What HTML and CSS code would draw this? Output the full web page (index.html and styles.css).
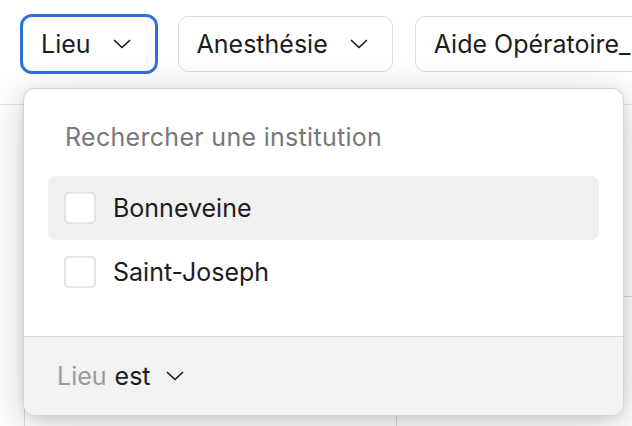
FILE: index.html
```html
<!DOCTYPE html>
<html lang="fr">
<head>
<meta charset="utf-8">
<link rel="stylesheet" href="styles.css">
</head>
<body>
<div class="page">
  <div class="toolbar">
    <button class="filter filter--active">Lieu <svg class="chev" viewBox="0 0 18 10"><path d="M1.5 1.5 L9 8.5 L16.5 1.5"/></svg></button>
    <button class="filter">Anesthésie <svg class="chev" viewBox="0 0 18 10"><path d="M1.5 1.5 L9 8.5 L16.5 1.5"/></svg></button>
    <button class="filter">Aide Opératoire_Instrumentiste <svg class="chev" viewBox="0 0 18 10"><path d="M1.5 1.5 L9 8.5 L16.5 1.5"/></svg></button>
  </div>
  <div class="table">
    <div class="row">
      <div class="cell cell--first"></div>
      <div class="cell"></div>
    </div>
    <div class="row">
      <div class="cell cell--first"></div>
      <div class="cell"></div>
    </div>
  </div>

  <div class="popover">
    <div class="popover__body">
      <div class="search">Rechercher une institution</div>
      <ul class="options">
        <li class="option option--hover"><span class="checkbox"></span><span class="label">Bonneveine</span></li>
        <li class="option"><span class="checkbox"></span><span class="label">Saint-Joseph</span></li>
      </ul>
    </div>
    <div class="popover__footer">
      <span class="muted">Lieu</span> <span class="op">est</span>
      <svg class="chev chev--small" viewBox="0 0 18 10"><path d="M1.5 1.5 L9 8.5 L16.5 1.5"/></svg>
    </div>
  </div>
</div>
</body>
</html>
```

FILE: styles.css
```css
* { box-sizing: border-box; }
html, body { margin: 0; padding: 0; background: #ffffff; }
body {
  font-family: Inter, "Noto Sans", "Liberation Sans", sans-serif;
  color: #1c1c1e;
  overflow: hidden;
  width: 632px;
  height: 426px;
}
.page { position: relative; width: 632px; height: 426px; overflow: hidden; }

.toolbar {
  display: flex;
  gap: 22px;
  padding: 16px 0 0 22px;
  height: 105px;
  border-bottom: 1px solid #e3e3e3;
  white-space: nowrap;
  overflow: hidden;
}
.filter {
  flex: none;
  display: flex;
  align-items: center;
  gap: 22px;
  height: 56px;
  padding: 0 24px 0 18px;
  background: #fff;
  border: 1px solid #dedede;
  border-radius: 10px;
  font: inherit;
  font-size: 25px;
  color: #1c1c1e;
}
.filter--active {
  border-color: #2f6fdc;
  box-shadow: 0 0 0 2px #2f6fdc;
}
.chev {
  width: 18px;
  height: 10px;
  fill: none;
  stroke: #1c1c1e;
  stroke-width: 1.7;
  stroke-linecap: round;
  stroke-linejoin: round;
}

.table { margin-left: 24px; border-left: 1px solid #dcdcdc; }
.row { display: flex; height: 192px; border-bottom: 1px solid #dcdcdc; }
.cell { height: 100%; }
.cell--first { width: 372px; border-right: 1px solid #dcdcdc; }

.popover {
  position: absolute;
  left: 23px;
  top: 88px;
  width: 601px;
  height: 328px;
  background: #fff;
  border: 1px solid #d4d4d4;
  border-radius: 12px;
  box-shadow: 0 8px 40px rgba(0,0,0,0.2), 0 2px 8px rgba(0,0,0,0.08);
  overflow: hidden;
  display: flex;
  flex-direction: column;
}
.popover__body {
  flex: 1;
  padding: 32px 24px 0 24px;
}
.search {
  padding-left: 17px;
  font-size: 25px;
  letter-spacing: 0.3px;
  line-height: 32px;
  color: #78787a;
}
.options {
  list-style: none;
  margin: 23px 0 0 0;
  padding: 0;
}
.option {
  display: flex;
  align-items: center;
  gap: 17px;
  height: 64px;
  padding: 0 16px;
  border-radius: 7px;
  font-size: 25px;
}
.option--hover { background: #f1f1f1; }
.checkbox {
  width: 32px;
  height: 32px;
  border: 2px solid #e4e4e4;
  border-radius: 5px;
  background: #fff;
  flex: none;
}
.popover__footer {
  height: 79px;
  border-top: 1px solid #dadada;
  background: #f2f2f2;
  display: flex;
  align-items: center;
  padding-left: 33px;
  font-size: 25px;
}
.muted { color: #9b9b9f; }
.op { margin-left: 8px; }
.chev--small { margin-left: 15px; width: 18px; height: 10px; }
```
